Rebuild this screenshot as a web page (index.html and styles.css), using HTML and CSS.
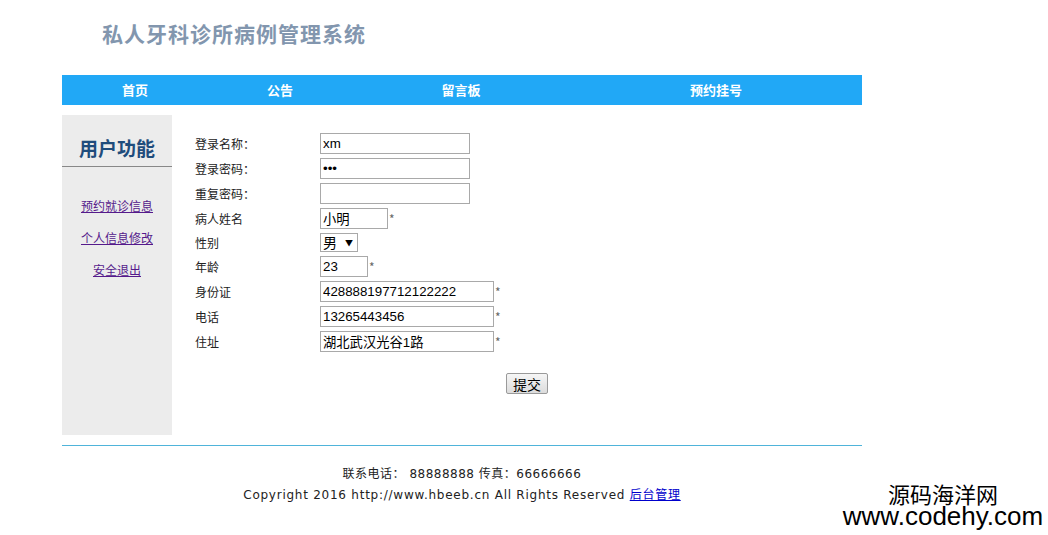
FILE: index.html
```html
<!DOCTYPE html>
<html lang="zh-CN">
<head>
    <meta charset="UTF-8">
    <title>私人牙科诊所病例管理系统</title>
    <link rel="stylesheet" href="styles.css">
</head>
<body>
    <div class="page">
        <div class="header">
            <h1>私人牙科诊所病例管理系统</h1>
        </div>
        <ul class="nav">
            <li class="nav-home"><a href="#">首页</a></li>
            <li class="nav-notice"><a href="#">公告</a></li>
            <li class="nav-board"><a href="#">留言板</a></li>
            <li class="nav-book"><a href="#">预约挂号</a></li>
        </ul>
        <div class="main">
            <div class="side">
                <div class="side-title">用户功能</div>
                <div class="side-links">
                    <a href="#">预约就诊信息</a>
                    <a href="#">个人信息修改</a>
                    <a href="#">安全退出</a>
                </div>
            </div>
            <div class="content">
                <form class="user-form">
                    <div class="fields">
                        <label>登录名称：</label>
                        <div class="field"><input type="text" class="w150" value="xm"></div>
                        <label>登录密码：</label>
                        <div class="field"><input type="password" class="w150" value="123"></div>
                        <label>重复密码：</label>
                        <div class="field"><input type="password" class="w150" value=""></div>
                        <label>病人姓名</label>
                        <div class="field"><input type="text" class="w68" value="小明"><span class="req">*</span></div>
                        <label>性别</label>
                        <div class="field">
                            <span class="select-wrap">
                                <select class="sex">
                                    <option>男</option>
                                    <option>女</option>
                                </select>
                                <span class="arrow">&#9660;</span>
                            </span>
                        </div>
                        <label>年龄</label>
                        <div class="field"><input type="text" class="w48" value="23"><span class="req">*</span></div>
                        <label>身份证</label>
                        <div class="field"><input type="text" class="w174" value="428888197712122222"><span class="req">*</span></div>
                        <label>电话</label>
                        <div class="field"><input type="text" class="w174" value="13265443456"><span class="req">*</span></div>
                        <label>住址</label>
                        <div class="field"><input type="text" class="w174" value="湖北武汉光谷1路"><span class="req">*</span></div>
                    </div>
                    <div class="submit-row">
                        <button type="button" class="btn">提交</button>
                    </div>
                </form>
            </div>
        </div>
        <div class="footer">
            <p>联系电话： 88888888 传真：66666666</p>
            <p class="copy">Copyright 2016 http://www.hbeeb.cn All Rights Reserved <a href="#">后台管理</a></p>
        </div>
    </div>
    <div class="watermark">
        <div class="wm-cn">源码海洋网</div>
        <div class="wm-url">www.codehy.com</div>
    </div>
</body>
</html>
```

FILE: styles.css
```css
body {
    margin: 0;
    background: #fff;
    font-family: "Noto Sans CJK SC", sans-serif;
    font-size: 12px;
    color: #333;
}
.page {
    width: 800px;
    margin-left: 62px;
}
.header {
    height: 75px;
}
.header h1 {
    margin: 0;
    padding: 20px 0 0 40px;
    font-size: 21px;
    line-height: 26px;
    font-weight: bold;
    color: #8296ae;
    letter-spacing: 1px;
}
.nav {
    display: flex;
    margin: 0;
    padding: 0;
    list-style: none;
    height: 30px;
    background: #21a8f6;
}
.nav li {
    text-align: center;
    line-height: 30px;
}
.nav a {
    color: #fff;
    font-size: 13px;
    font-weight: bold;
    text-decoration: none;
}
.nav-home { width: 146px; }
.nav-notice { width: 144px; }
.nav-board { width: 218px; }
.nav-book { width: 292px; }

.main {
    display: flex;
    margin-top: 10px;
    height: 320px;
}
.side {
    width: 110px;
    background: #ececec;
}
.side-title {
    padding: 20px 0 5px;
    line-height: 26px;
    font-size: 19px;
    font-weight: bold;
    color: #1f4c7c;
    text-align: center;
    border-bottom: 1px solid #888;
}
.side-links {
    display: flex;
    flex-direction: column;
    align-items: center;
    gap: 16px;
    padding-top: 31px;
}
.side-links a {
    line-height: 16px;
    font-size: 12px;
    color: #551a8b;
}
.content {
    flex: 1;
    padding: 18px 0 0 23px;
}
.fields {
    display: grid;
    grid-template-columns: 125px auto;
    row-gap: 4px;
    align-items: center;
}
.fields label {
    font-size: 12px;
    color: #222;
}
.field {
    display: flex;
    align-items: center;
}
.field input {
    box-sizing: border-box;
    height: 21px;
    margin: 0;
    padding: 1px 2px;
    border: 1px solid #a9a9a9;
    font-family: "Liberation Sans", "Noto Sans CJK SC", sans-serif;
    font-size: 13.3px;
    color: #000;
}
.w150 { width: 150px; }
.w68 { width: 68px; }
.w48 { width: 48px; }
.w174 { width: 174px; }
.req {
    margin-left: 1px;
    font-size: 12px;
    line-height: 16px;
    color: #666;
}
.select-wrap {
    position: relative;
    display: inline-block;
}
.sex {
    appearance: none;
    -webkit-appearance: none;
    box-sizing: border-box;
    width: 38px;
    height: 19px;
    margin: 0;
    padding: 0 0 0 2px;
    border: 1px solid #a9a9a9;
    background: #fff;
    font-family: "Noto Sans CJK SC", sans-serif;
    font-size: 14px;
    line-height: 17px;
    color: #000;
}
.arrow {
    position: absolute;
    right: 5px;
    top: 4px;
    font-size: 8px;
    color: #000;
    pointer-events: none;
}
.submit-row {
    padding: 21px 0 0 311px;
}
.btn {
    box-sizing: border-box;
    width: 42px;
    height: 21px;
    padding: 0;
    border: 1px solid #9a9a9a;
    border-radius: 2px;
    background: linear-gradient(#f6f6f6, #dcdcdc);
    font-family: "Noto Sans CJK SC", sans-serif;
    font-size: 14px;
    color: #000;
}
.footer {
    margin-top: 10px;
    padding-top: 18px;
    border-top: 1px solid #4fb4da;
    text-align: center;
}
.footer p {
    margin: 0;
    line-height: 21px;
    font-family: "DejaVu Sans", "Noto Sans CJK SC", sans-serif;
    font-size: 12px;
    color: #222;
    letter-spacing: 0.5px;
}
.footer .copy {
    letter-spacing: 0.75px;
}
.footer a {
    color: #0000cc;
}
.watermark {
    position: absolute;
    left: 836px;
    top: 483px;
    width: 214px;
    text-align: center;
    color: #000;
}
.wm-cn {
    font-family: "Noto Sans CJK SC", sans-serif;
    font-size: 22px;
    line-height: 20px;
}
.wm-url {
    margin-top: 2px;
    font-family: "Liberation Sans", sans-serif;
    font-size: 26px;
    line-height: 22px;
}
```
